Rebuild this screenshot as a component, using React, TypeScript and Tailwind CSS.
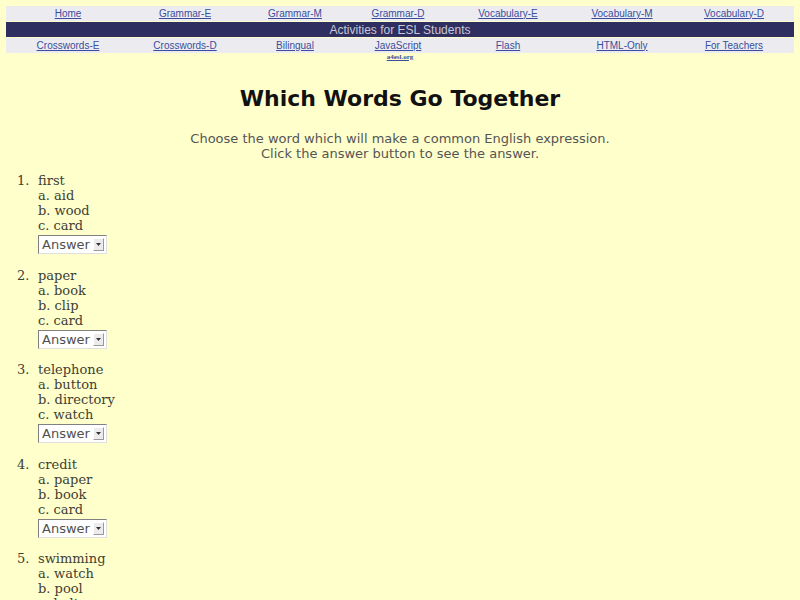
const topLinks = ["Home", "Grammar-E", "Grammar-M", "Grammar-D", "Vocabulary-E", "Vocabulary-M", "Vocabulary-D"];
const bottomLinks = ["Crosswords-E", "Crosswords-D", "Bilingual", "JavaScript", "Flash", "HTML-Only", "For Teachers"];

const questions = [
  { word: "first", options: ["aid", "wood", "card"] },
  { word: "paper", options: ["book", "clip", "card"] },
  { word: "telephone", options: ["button", "directory", "watch"] },
  { word: "credit", options: ["paper", "book", "card"] },
  { word: "swimming", options: ["watch", "pool", "belt"] },
];

function NavRow({ links }: { links: string[] }) {
  return (
    <div className="grid h-[15px] grid-cols-[124fr_110fr_110fr_96fr_124fr_104fr_120fr] bg-[#ececf0]">
      {links.map((link) => (
        <div key={link} className="flex items-center justify-center">
          <a
            href="#"
            className="text-[10px] leading-none text-[#3a4c9c] underline"
            style={{ fontFamily: '"Liberation Sans", Arial, sans-serif' }}
          >
            {link}
          </a>
        </div>
      ))}
    </div>
  );
}

function AnswerSelect() {
  return (
    <div className="mt-[2px] flex h-[19px] w-[69px] items-center border border-t-[#808080] border-l-[#808080] border-b-[#e0e0e0] border-r-[#e0e0e0] bg-white pl-[3px] pr-[2px]">
      <span
        className="flex-1 text-[13px] leading-none text-[#505050]"
        style={{ fontFamily: '"DejaVu Sans", Verdana, sans-serif' }}
      >
        Answer
      </span>
      <span className="flex h-[13px] w-[11px] items-center justify-center border border-t-white border-l-white border-b-[#999] border-r-[#999] bg-[#ececec]">
        <svg width="5" height="3" viewBox="0 0 5 3">
          <path d="M0 0h5L2.5 3z" fill="#333" />
        </svg>
      </span>
    </div>
  );
}

export default function App() {
  return (
    <div className="min-h-screen bg-[#ffffcc] px-[6px] pt-[6px]">
      <div className="flex flex-col gap-px">
        <NavRow links={topLinks} />
        <div className="flex h-[15px] items-center justify-center bg-[#2e2e60]">
          <span
            className="text-[12px] leading-none text-[#c8c8d4]"
            style={{ fontFamily: '"Liberation Sans", Arial, sans-serif' }}
          >
            Activities for ESL Students
          </span>
        </div>
        <NavRow links={bottomLinks} />
      </div>

      <div className="flex h-[8px] items-center justify-center">
        <a
          href="#"
          className="text-[7px] font-bold leading-none text-[#3a4c9c] underline"
          style={{ fontFamily: '"Liberation Serif", serif' }}
        >
          a4esl.org
        </a>
      </div>

      <h1
        className="mt-[23px] text-center text-[22px] font-bold leading-[30px] text-[#111]"
        style={{ fontFamily: '"DejaVu Sans", sans-serif' }}
      >
        Which Words Go Together
      </h1>

      <p
        className="mt-[17px] text-center text-[13px] leading-[15px] text-[#555]"
        style={{ fontFamily: '"DejaVu Sans", Verdana, sans-serif' }}
      >
        Choose the word which will make a common English expression.
        <br />
        Click the answer button to see the answer.
      </p>

      <div
        className="mt-[12px] flex flex-col gap-[13.5px] pl-[11px] text-[13px] leading-[15px] text-[#404034]"
        style={{ fontFamily: '"DejaVu Serif", Georgia, serif' }}
      >
        {questions.map((q, index) => (
          <div key={q.word} className="flex">
            <span className="w-[21px]">{index + 1}.</span>
            <div className="flex flex-col">
              <span>{q.word}</span>
              {q.options.map((option, optionIndex) => (
                <span key={option}>
                  {"abc"[optionIndex]}. {option}
                </span>
              ))}
              <AnswerSelect />
            </div>
          </div>
        ))}
      </div>
    </div>
  );
}
